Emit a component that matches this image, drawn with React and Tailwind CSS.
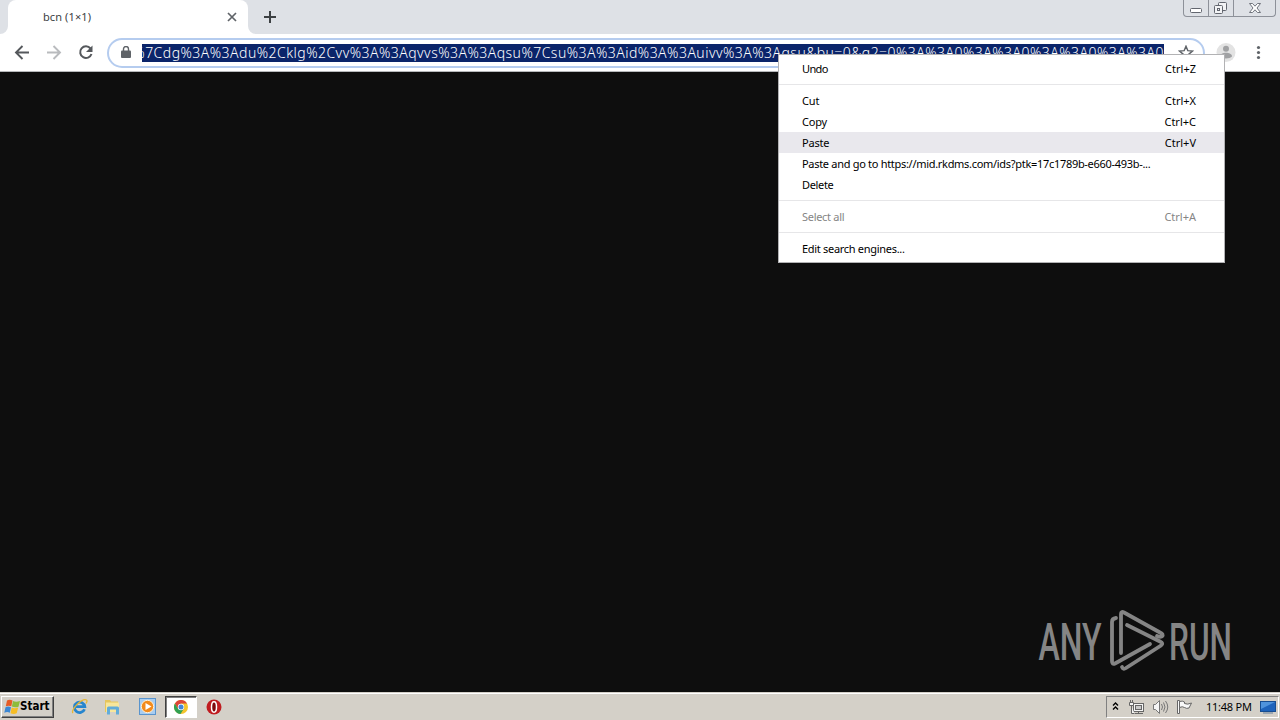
const menuItems = [
  { label: 'Undo', keys: 'Ctrl+Z', labelClass: 'tracking-[-0.65px]' },
  { divider: true },
  { label: 'Cut', keys: 'Ctrl+X', labelClass: 'tracking-[-0.1px]' },
  { label: 'Copy', keys: 'Ctrl+C', labelClass: 'tracking-[-0.2px]' },
  { label: 'Paste', keys: 'Ctrl+V', active: true, labelClass: 'tracking-[-0.2px]' },
  {
    label: 'Paste and go to https://mid.rkdms.com/ids?ptk=17c1789b-e660-493b-...',
    labelClass: 'tracking-[-0.3px]',
  },
  { label: 'Delete', labelClass: 'tracking-[-0.35px]' },
  { divider: true },
  { label: 'Select all', keys: 'Ctrl+A', disabled: true, labelClass: 'tracking-[-0.3px]' },
  { divider: true },
  { label: 'Edit search engines...', labelClass: 'tracking-[-0.3px]' },
];

const url =
  '%7Cdg%3A%3Adu%2Cklg%2Cvv%3A%3Aqvvs%3A%3Aqsu%7Csu%3A%3Aid%3A%3Auivv%3A%3Aqsu&bu=0&g2=0%3A%3A0%3A%3A0%3A%3A0%3A%3A0';

const TabStrip = () => (
  <div className="relative flex h-[34px] bg-[#dee1e6] pl-2">
    <div className="relative flex h-full w-60 items-center rounded-t-lg bg-white pl-[35px]">
      <span className="w-[183px] text-[11px] tracking-[0.1px] text-[#3c4043]">bcn (1×1)</span>
      <svg width="12" height="12" viewBox="0 0 12 12" stroke="#5f6368" strokeWidth="1.7">
        <path d="M2 2l8 8M10 2l-8 8" />
      </svg>
      <svg className="absolute -left-2 bottom-0" width="8" height="8" fill="#fff">
        <path d="M8 0v8H0a8 8 0 0 0 8-8z" />
      </svg>
      <svg className="absolute -right-2 bottom-0" width="8" height="8" fill="#fff">
        <path d="M0 0v8h8a8 8 0 0 1-8-8z" />
      </svg>
    </div>
    <svg className="mt-[10px] ml-[15px]" width="14" height="14" stroke="#3c4043" strokeWidth="2">
      <path d="M7 1v12M1 7h12" />
    </svg>
    <WindowControls />
  </div>
);

const WindowControls = () => (
  <div className="absolute top-0 right-[4px] flex h-[17px] w-[93px] rounded-b-[4px] border border-t-0 border-[#8d9199] text-[#62666f]">
    <div className="flex w-[25px] justify-center border-r border-[#8d9199]">
      <svg width="24" height="16" fill="#fff" stroke="currentColor">
        <rect x="6.5" y="8.5" width="11" height="4" rx="1" />
      </svg>
    </div>
    <div className="flex w-[25px] justify-center border-r border-[#8d9199]">
      <svg width="24" height="16" fill="#f2f3f5" stroke="currentColor">
        <rect x="9.5" y="2.5" width="8" height="8" rx="1" />
        <rect x="5.5" y="5.5" width="8" height="8" rx="1" />
        <rect x="8.5" y="8.5" width="2" height="2" />
      </svg>
    </div>
    <div className="flex flex-1 justify-center">
      <svg width="24" height="16" fill="#fff" stroke="currentColor" strokeWidth="0.9">
        <path d="M6.500 3.500h3l2.500 2.700 2.500-2.700h3L14 8l3.500 4.500h-3L12 9.800 9.500 12.500h-3L10 8z" />
      </svg>
    </div>
  </div>
);

const Toolbar = () => (
  <div className="flex h-[38px] items-center border-b border-[#b6b8ba] bg-white pl-[14px]">
    <svg width="16" height="16" viewBox="0 0 16 16" fill="none" stroke="#55585c" strokeWidth="1.9">
      <path d="M15 7.500H2.500M8.500 1L2 7.500 8.500 14" />
    </svg>
    <svg className="ml-4" width="16" height="16" viewBox="0 0 16 16" fill="none" stroke="#b9bbbe" strokeWidth="1.9">
      <path d="M1 7.500h12.500M7.500 1L14 7.500 7.500 14" />
    </svg>
    <svg className="ml-4" width="16" height="16" viewBox="0 0 16 16">
      <path d="M12.500 3.500A5.800 5.800 0 1 0 13.500 9" fill="none" stroke="#55585c" strokeWidth="2" />
      <path d="M14.500.5V7H8z" fill="#55585c" />
    </svg>
    <div className="ml-[13px] flex h-[30px] w-[1098px] items-center rounded-full border-2 border-[#b5ccef] bg-white pl-3">
      <svg width="10" height="13" viewBox="0 0 10 13">
        <rect y="4.500" width="10" height="7.500" rx="1" fill="#5f6368" />
        <path d="M2.500 5V3a2.500 2.500 0 0 1 5 0V5" fill="none" stroke="#5f6368" strokeWidth="1.400" />
      </svg>
      <div className="ml-[11px] flex h-[18px] w-[1022px] items-center justify-end overflow-hidden bg-[#0a246a] pb-px text-[14px] font-light tracking-[0.465px] whitespace-nowrap text-white">
        <span>{url}</span>
      </div>
      <svg className="ml-[14px]" width="16" height="16" viewBox="0 0 16 16" fill="none" stroke="#5f6368" strokeWidth="1.400">
        <path d="M8 1.200l1.800 4.400 4.700.4-3.600 3.100 1.100 4.600L8 11.300l-4 2.400 1.100-4.600L1.500 6l4.700-.4z" />
      </svg>
    </div>
    <svg className="ml-[11px]" width="20" height="20" viewBox="0 0 20 20">
      <circle cx="10" cy="9.500" r="9.500" fill="#e3e3e3" />
      <circle cx="10" cy="5.800" r="3" fill="#a0a1a3" />
      <path d="M4 13.500c0-5 12-5 12 0-2 2.500-10 2.500-12 0z" fill="#a0a1a3" />
    </svg>
    <svg className="ml-5" width="5" height="16" fill="#5f6368">
      <circle cx="2.500" cy="2.500" r="1.600" />
      <circle cx="2.500" cy="7.500" r="1.600" />
      <circle cx="2.500" cy="12.500" r="1.600" />
    </svg>
  </div>
);

const ContextMenu = () => (
  <div className="absolute top-[54px] left-[778px] flex h-[209px] w-[447px] flex-col border border-[#b2b2b4] bg-white pt-[3px] text-[11px] text-black">
    {menuItems.map((item, index) =>
      item.divider ? (
        <div key={index} className="flex h-[11px] items-center">
          <div className="h-px w-full bg-[#e6e6e8]" />
        </div>
      ) : (
        <div
          key={index}
          className={`flex h-[21px] shrink-0 items-center justify-between pt-0.5 pr-[28px] pl-[23px] whitespace-nowrap ${
            item.active ? 'bg-[#e9e8ed]' : ''
          } ${item.disabled ? 'text-[#858585]' : ''}`}
        >
          <span className={item.labelClass}>{item.label}</span>
          <span>{item.keys}</span>
        </div>
      )
    )}
  </div>
);

const Watermark = () => (
  <svg className="absolute top-[608px] left-[1036px]" width="220" height="66" fill="#858585">
    <g fontFamily="Roboto" fontWeight="500" fontSize="52">
      <text x="2.500" y="52" textLength="63" lengthAdjust="spacingAndGlyphs">ANY</text>
      <text x="133" y="52" textLength="63" lengthAdjust="spacingAndGlyphs">RUN</text>
    </g>
    <g fill="none" stroke="#858585" strokeWidth="3.800" strokeLinecap="round" strokeLinejoin="round">
      <path d="M85 45V6q0-3 3-1.500L124 24.500q4 2 2 3.800-2 1.200-5-.3" />
      <path d="M91 17l33 16.500q4 2 1 4L90 60q-3 2-4-1" />
      <path d="M80 10q-4 .5-4 4v39q0 4 3 2.500L114 36" />
    </g>
  </svg>
);

const Taskbar = () => (
  <div className="flex h-7 items-center border-t border-[#d4d0c8] bg-[#d4d0c8] shadow-[inset_0_1px_0_#fff]">
    <div className="mt-px ml-px flex h-[22px] w-[53px] items-center border border-t-white border-r-[#404040] border-b-[#404040] border-l-white pl-0.5 shadow-[inset_-1px_-1px_0_#808080]">
      <svg width="16" height="16" viewBox="0 0 16 16">
        <path d="M3 1.500q2.500-1.500 5.500 0L7.300 7.300q-2.500-1.200-5.500 0z" fill="#e65b24" />
        <path d="M9 2q3 1.500 7 0l-1.500 5.700Q11 9 7.900 7.500z" fill="#8dbb3a" />
        <path d="M1.500 8.200q2.500-1.200 5.500 0l-1.200 5.600q-2.500-1.500-5.500 0z" fill="#3c87d3" />
        <path d="M7.700 8.600q3 1.200 6.500 0l-1.500 5.600q-3 1.500-6.200 0z" fill="#f6bd25" />
      </svg>
      <span className="font-['DejaVu_Sans_Condensed','DejaVu_Sans',sans-serif] text-[11.5px] font-bold text-black">
        Start
      </span>
    </div>
    {/* Internet Explorer */}
    <svg className="ml-[17px]" width="17" height="17" viewBox="0 0 17 17" fill="none">
      <path d="M13.500 11.200A5.200 5.200 0 1 1 13.800 8.700H5" stroke="#2685ce" strokeWidth="2.800" />
      <path d="M2 15C-1 12 11 0 15.500 2c1 .7.500 2-.5 3.500" stroke="#e7b632" strokeWidth="1.300" />
    </svg>
    {/* Explorer */}
    <svg className="ml-4" width="17" height="17" viewBox="0 0 17 17">
      <path d="M1 2h5l1 1.500h7V14H1z" fill="#e6c55c" />
      <path d="M2 4.500h13V14H2z" fill="#f7e69b" />
      <path d="M3 10q0-1.500 1.500-1.500h9q1.500 0 1.500 1.500v6.500h-3v-5H6v5H3z" fill="#62acd9" />
    </svg>
    {/* Media Player */}
    <svg className="ml-[18px]" width="17" height="17" viewBox="0 0 17 17">
      <rect x=".5" y=".5" width="16" height="16" fill="#a8cdf0" stroke="#5994cd" />
      <circle cx="8.500" cy="8.500" r="6.200" fill="#f28b1c" stroke="#fff1d7" />
      <path d="M6.500 5l6 3.500-6 3.500z" fill="#fff" />
    </svg>
    <div className="ml-[9px] flex h-[22px] w-8 items-center justify-center border border-t-[#404040] border-r-white border-b-white border-l-[#404040] bg-white shadow-[inset_1px_1px_0_#808080]">
      <svg width="14" height="14" viewBox="0 0 14 14">
        <circle cx="7" cy="7" r="7" fill="#f4c42d" />
        <path d="M.9 3.500A7 7 0 0 1 13.100 3.500H7L4 8.800z" fill="#dc4538" />
        <path d="M.9 3.500A7 7 0 0 0 6.500 14L9.800 8.800 4 8.800z" fill="#31a052" />
        <circle cx="7" cy="7" r="3.200" fill="#fff" />
        <circle cx="7" cy="7" r="2.500" fill="#4285d8" />
      </svg>
    </div>
    {/* Opera */}
    <svg className="ml-[9px]" width="16" height="16" viewBox="0 0 16 16">
      <circle cx="8" cy="8" r="7.500" fill="#c01c20" />
      <ellipse cx="8" cy="8" rx="2.500" ry="5.200" fill="#7e0a0d" stroke="#fff" strokeWidth="1.500" />
    </svg>
    <Tray />
  </div>
);

const Tray = () => (
  <div className="mt-px mr-px ml-auto flex h-[22px] w-[173px] items-center border border-t-[#808080] border-r-white border-b-white border-l-[#808080] pl-[5px]">
    <svg width="7" height="10" fill="none" stroke="#000" strokeWidth="1.400">
      <path d="M1 3.500L3.500 1 6 3.500M1 7.500L3.500 5 6 7.500" />
    </svg>
    <svg className="ml-[9px]" width="16" height="16" fill="#f5f5f5" stroke="#666">
      <rect x="5.500" y="4.500" width="10" height="8" />
      <rect x="7.500" y="6.500" width="6" height="4" fill="#c9c9c9" />
      <path d="M7 14.500h8M10.500 13v1" />
      <path d="M1.500 3.500h4v3h-4zM2.500 1v2M4.500 1v2M3.500 7v7.500h3" />
    </svg>
    <svg className="ml-2" width="17" height="16" fill="#f5f5f5" stroke="#777">
      <path d="M1.500 5.500h2l4-4v13l-4-4h-2z" />
      <path d="M9.500 5q2 3 0 6M11.500 3.500q3 4.500 0 9M13.500 2q4.500 6 0 12" fill="none" />
    </svg>
    <svg className="ml-[7px]" width="17" height="16" fill="#f8f8f8" stroke="#666">
      <path d="M1.500 1.500h2v13h-2z" />
      <path d="M3.500 2.500q3-1 5 .5v1.500q3 1.500 7-.5l-2.500 5q-2.500 1-4.500-.5-2-1.500-5 0z" />
    </svg>
    <span className="ml-[13px] w-[46px] text-[11px] tracking-[-0.25px] whitespace-nowrap text-black">11:48 PM</span>
    <svg className="ml-2" width="16" height="13">
      <rect x=".5" y=".5" width="15" height="10" fill="#1e63bb" stroke="#174d91" />
      <path d="M1 1h14L1 8z" fill="#4f93dc" />
      <path d="M3 12h10" stroke="#657f9b" />
    </svg>
  </div>
);

const App = () => (
  <div className="relative flex h-[720px] w-[1280px] flex-col overflow-hidden bg-[#0e0e0e] font-['Noto_Sans',sans-serif]">
    <TabStrip />
    <Toolbar />
    <main className="flex-1" />
    <Taskbar />
    <ContextMenu />
    <Watermark />
  </div>
);

export default App;
